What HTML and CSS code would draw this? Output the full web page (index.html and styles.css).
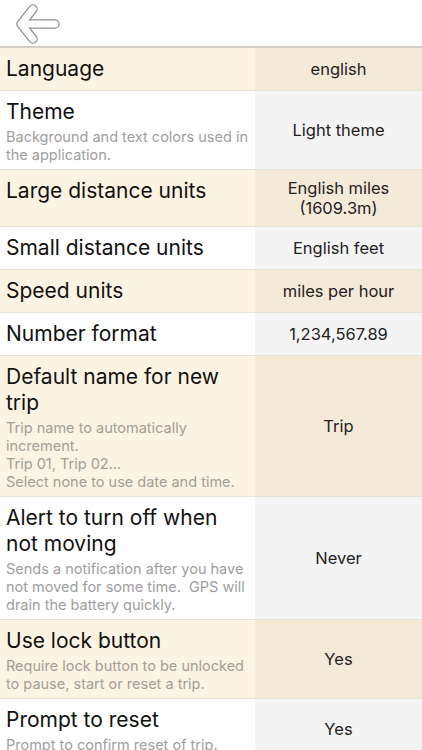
FILE: index.html
```html
<!DOCTYPE html>
<html>
<head>
    <title>Settings</title>
    <meta charset="utf-8">
    <meta name="viewport" content="width=device-width, user-scalable=no, minimum-scale=1.0, maximum-scale=1.0">
    <link rel="stylesheet" href="styles.css">
</head>
<body>

    <div class="topbar">
        <a class="back" href="#">
            <svg width="66" height="46" viewBox="0 0 66 46">
                <g fill="none" stroke="#909090" stroke-width="9.5" stroke-linecap="round" stroke-linejoin="round">
                    <path d="M33 9 L21 24 L33 39 M21 24 L55 24"/>
                </g>
                <g fill="none" stroke="#ffffff" stroke-width="7" stroke-linecap="round" stroke-linejoin="round">
                    <path d="M33 9 L21 24 L33 39 M21 24 L55 24"/>
                </g>
            </svg>
        </a>
    </div>

    <div class="list">
        <div class="row odd">
            <div class="label"><div class="title">Language</div></div>
            <div class="value">english</div>
        </div>
        <div class="row">
            <div class="label">
                <div class="title">Theme</div>
                <div class="sub">Background and text colors used in the application.</div>
            </div>
            <div class="value">Light theme</div>
        </div>
        <div class="row odd">
            <div class="label"><div class="title">Large distance units</div></div>
            <div class="value">English miles<br>(1609.3m)</div>
        </div>
        <div class="row">
            <div class="label"><div class="title">Small distance units</div></div>
            <div class="value">English feet</div>
        </div>
        <div class="row odd">
            <div class="label"><div class="title">Speed units</div></div>
            <div class="value">miles per hour</div>
        </div>
        <div class="row">
            <div class="label"><div class="title">Number format</div></div>
            <div class="value">1,234,567.89</div>
        </div>
        <div class="row odd">
            <div class="label">
                <div class="title">Default name for new trip</div>
                <div class="sub">Trip name to automatically increment.<br>Trip 01, Trip 02...<br>Select none to use date and time.</div>
            </div>
            <div class="value">Trip</div>
        </div>
        <div class="row">
            <div class="label">
                <div class="title">Alert to turn off when not moving</div>
                <div class="sub">Sends a notification after you have not moved for some time.&nbsp; GPS will drain the battery quickly.</div>
            </div>
            <div class="value">Never</div>
        </div>
        <div class="row odd">
            <div class="label">
                <div class="title">Use lock button</div>
                <div class="sub">Require lock button to be unlocked to pause, start or reset a trip.</div>
            </div>
            <div class="value">Yes</div>
        </div>
        <div class="row">
            <div class="label">
                <div class="title">Prompt to reset</div>
                <div class="sub">Prompt to confirm reset of trip.</div>
            </div>
            <div class="value">Yes</div>
        </div>
    </div>

</body>
</html>
```

FILE: styles.css
```css
html, body {
    height: 100%;
}

body {
    background-color: #ffffff;
    margin: 0;
    font-family: Inter, "Liberation Sans", Arial, sans-serif;
    overflow: hidden;
    color: #111111;
}

/* top bar with back arrow */
.topbar {
    height: 46px;
    border-bottom: 2px solid #d2cdc5;
    display: flex;
    align-items: center;
}
.back {
    display: block;
    width: 66px;
    height: 46px;
}

/* settings rows */
.row {
    display: flex;
    border-bottom: 1px solid #e6e0d6;
    background-color: #ffffff;
}
.row.odd {
    background-color: #fdf3e2;
}
.label {
    flex: 0 0 243px;
    padding: 8px 6px;
}
.title {
    font-size: 21px;
    line-height: 26px;
}
.sub {
    font-size: 14.5px;
    line-height: 18px;
    color: #9e9e9e;
    margin-top: 3px;
    margin-bottom: -3px;
}
.odd .sub {
    color: #a39e96;
}
.value {
    flex: 1;
    display: flex;
    align-items: center;
    justify-content: center;
    text-align: center;
    font-size: 16.5px;
    line-height: 20px;
    color: #222222;
    background-color: #f4f4f4;
    padding: 8px 4px;
}
.odd .value {
    background-color: #f5e9d8;
}
```
